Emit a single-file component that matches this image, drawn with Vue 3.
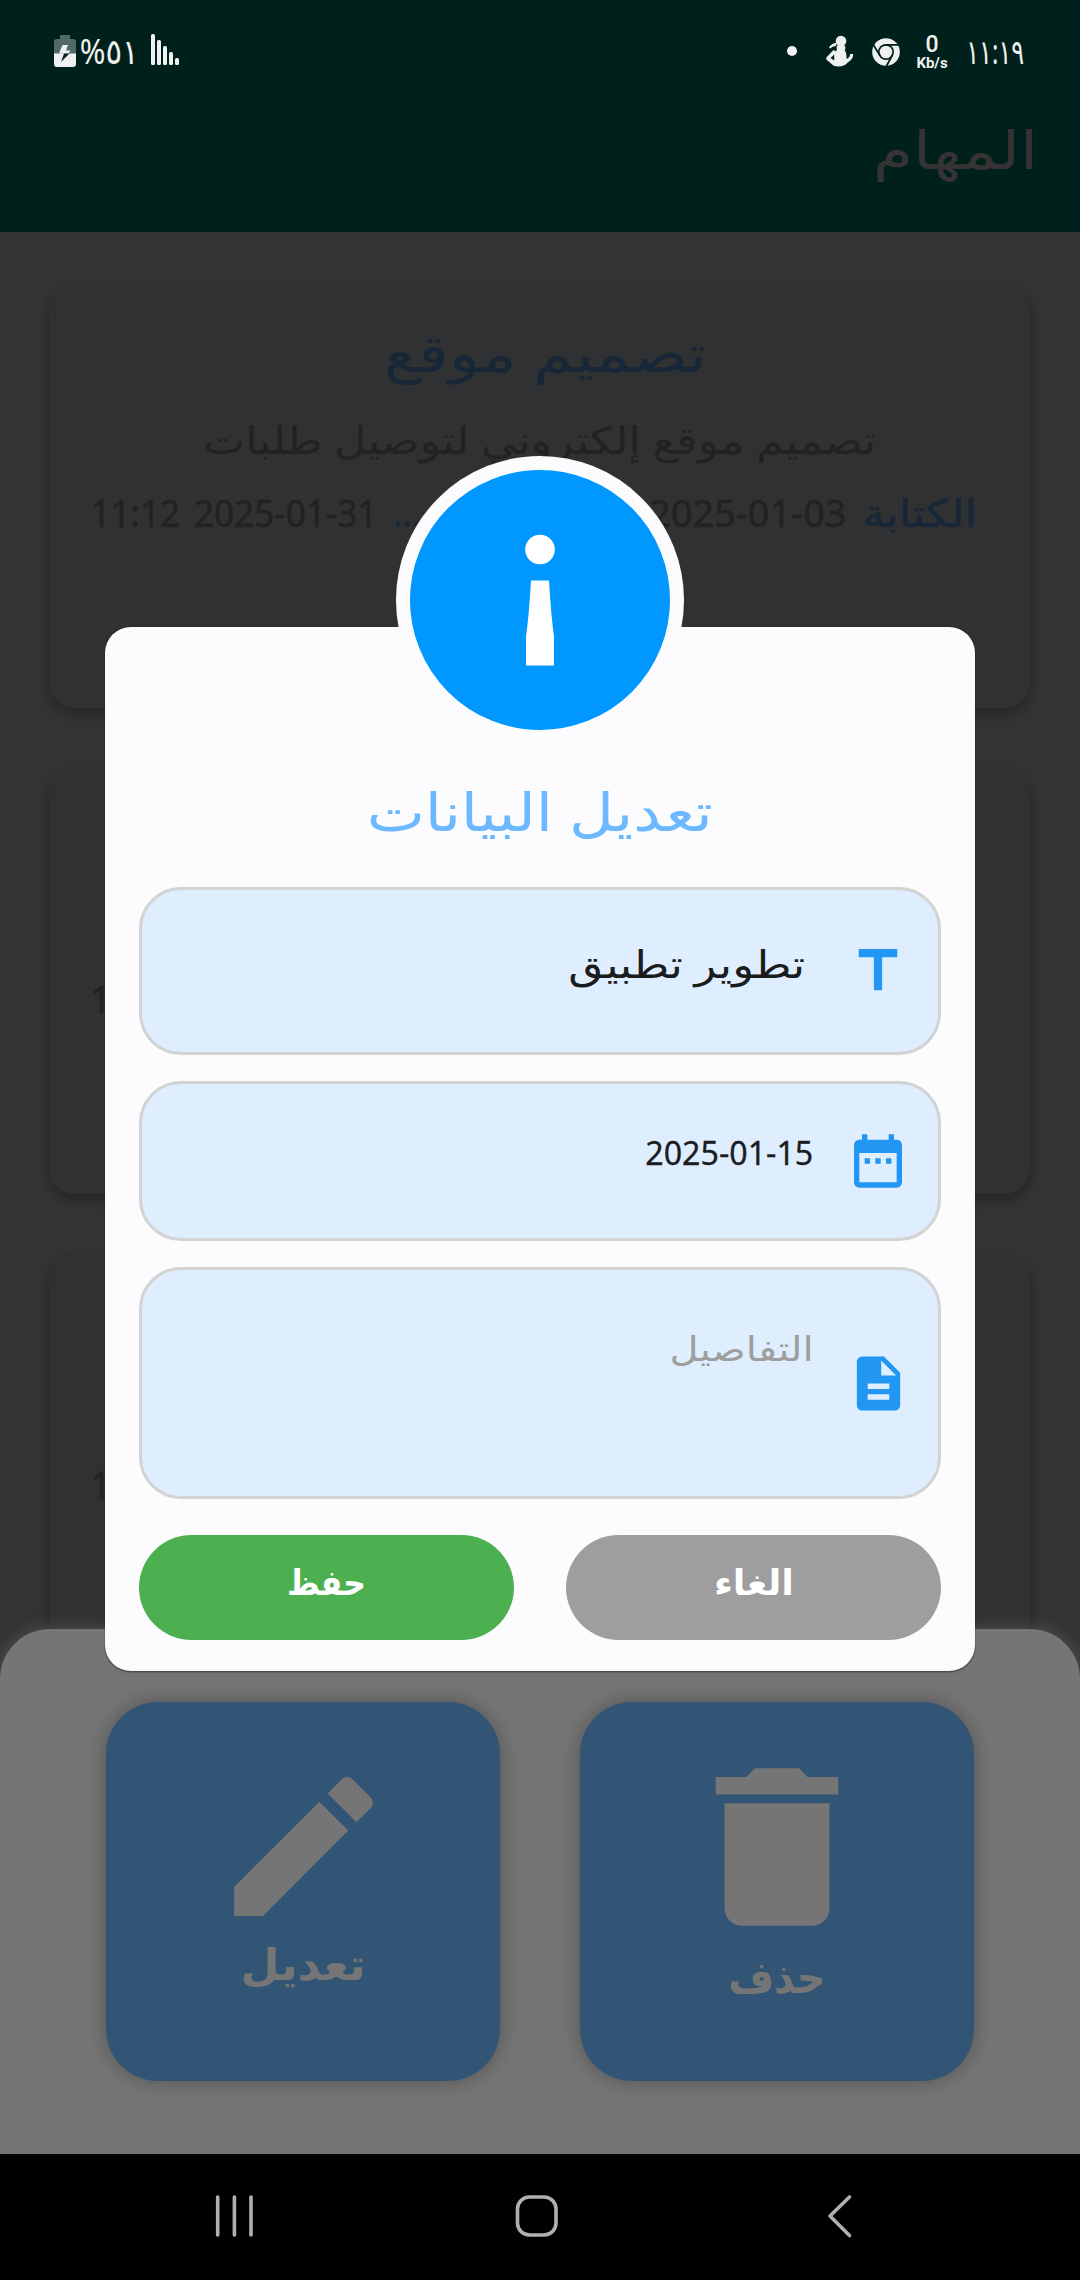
<script setup>
const cards = [
  { title: 'تصميم موقع', text: 'تصميم موقع إلكتروني لتوصيل طلبات' },
  { title: '', text: '' },
  { title: '', text: '' }
]

// Stretches or condenses a run of text to the given width, keeping its right edge.
const vFit = {
  mounted(el, { value }) {
    const natural = el.getBoundingClientRect().width
    el.style.transform = `scaleX(${value / natural})`
    el.style.marginLeft = `${value - natural}px`
  }
}
</script>

<template>
  <div class="screen">
    <header class="appbar">
      <div class="status">
        <div class="status-side">
          <svg class="battery" width="22" height="34" viewBox="0 0 22 34">
            <path d="M6 1h10v4h3q3 0 3 3v12H0V8q0-3 3-3h3z" fill="#526a65" />
            <path d="M0 19.500h22V30q0 3-3 3H3q-3 0-3-3z" fill="#eff1f0" />
            <path d="M8.500 11H14l-2 5.500h4.500L14.500 19.500H5z" fill="#eff1f0" />
            <path d="M10 19.500h5.500L7 28z" fill="#0b2420" />
          </svg>
          <span v-fit="59" class="fit percent">%٥١</span>
          <svg class="signal" width="28" height="31" viewBox="0 0 28 31" fill="#eff1f0">
            <rect x="0" y="0" width="4" height="31" rx="1.500" />
            <rect x="6" y="6" width="4" height="25" rx="1.500" />
            <rect x="12" y="12" width="4" height="19" rx="1.500" />
            <rect x="18" y="18" width="4" height="13" rx="1.500" />
            <rect x="24" y="24" width="4" height="7" rx="1.500" />
          </svg>
        </div>
        <div class="status-side">
          <i class="dot"></i>
          <svg class="person" width="28" height="32" viewBox="0 0 28 32" fill="#eff1f0">
            <circle cx="15" cy="6" r="5.300" />
            <path d="M3 12.500q3-5 8-4.500l-1.500 3q-3 0-5.500 2.500z" />
            <path d="M10.500 10.500h8.500q1 2.500-.2 4.800 1.700 2.700 1.700 5.700v3q3.200-1 3.700-5h3q0 5.500-5.500 8.500-3 4-9.500 4-4.700 0-7.700-3.500L.3 24.500v-2L7.500 15l2.800 1.500q.9-3 .2-6z" />
            <path d="M4.500 23l3.700-3.500v6z" fill="#00201b" />
          </svg>
          <svg class="chrome" width="28" height="28" viewBox="0 0 28 28">
            <circle cx="14" cy="14" r="13.800" fill="#eff1f0" />
            <circle cx="14" cy="14" r="8" fill="#00201b" />
            <circle cx="14" cy="14" r="6.300" fill="#eff1f0" />
            <path d="M13 6.900h13.300M8 17.600L1.300 6.800M20.300 17.300L14.500 28" stroke="#00201b" stroke-width="1.800" fill="none" />
          </svg>
          <div class="speed"><b>0</b><small>Kb/s</small></div>
          <span v-fit="58" class="fit clock">١١:١٩</span>
        </div>
      </div>
      <h1 dir="rtl"><span v-fit="165" class="fit">المهام</span></h1>
    </header>

    <main class="list" dir="rtl">
      <article v-for="(c, i) in cards" :key="i" class="card">
        <h2><span v-if="c.title" v-fit="323" class="fit">{{ c.title }}</span></h2>
        <p><span v-if="c.text" v-fit="673" class="fit">{{ c.text }}</span></p>
        <div class="dates">
          <div class="pair">
            <template v-if="i === 0">
              <b v-fit="115" class="fit">الكتابة</b>
              <span v-fit="197" class="fit">2025-01-03</span>
            </template>
          </div>
          <div class="pair">
            <b v-if="i === 0" v-fit="50" class="fit">م...</b>
            <span v-fit="287" class="fit moment" dir="ltr">11:12 2025-01-31</span>
          </div>
        </div>
      </article>
    </main>

    <section class="sheet" dir="rtl">
      <button class="tile delete">
        <svg width="210" height="210" viewBox="0 0 24 24"><path d="M6 19c0 1.100.9 2 2 2h8c1.100 0 2-.9 2-2V7H6v12zM19 4h-3.500l-1-1h-5l-1 1H5v2h14V4z" /></svg>
        <span v-fit="97" class="fit">حذف</span>
      </button>
      <button class="tile edit">
        <svg width="185" height="185" viewBox="0 0 24 24"><path d="M3 17.250V21h3.750L17.810 9.940l-3.750-3.750L3 17.250zM20.710 7.040c.39-.39.39-1.020 0-1.410l-2.340-2.340c-.39-.39-1.020-.39-1.410 0l-1.830 1.830 3.750 3.750 1.830-1.830z" /></svg>
        <span v-fit="125" class="fit">تعديل</span>
      </button>
    </section>

    <nav class="navbar">
      <svg width="1080" height="126" viewBox="0 0 1080 126" fill="none" stroke="#b0b0b0" stroke-width="3.600" stroke-linecap="round" stroke-linejoin="round">
        <path d="M217.700 43v38M234.400 43v38M251 43v38" />
        <rect x="517.500" y="43" width="38.500" height="38" rx="12" />
        <path d="M849.500 43L830 62l19.500 19.500" />
      </svg>
    </nav>

    <section class="dialog" dir="rtl">
      <div class="badge">
        <svg width="260" height="260" viewBox="0 0 260 260" fill="#fff">
          <circle cx="130" cy="79.500" r="14.800" />
          <path d="M121 110.500h18q2 35 5 56v29h-28v-29q3-21 5-56z" />
        </svg>
      </div>
      <h3><span v-fit="346" class="fit">تعديل البيانات</span></h3>
      <div class="field name">
        <svg width="66" height="66" viewBox="0 0 24 24"><path d="M5 4v3h5.500v12h3V7H19V4z" /></svg>
        <span v-fit="237" class="fit">تطوير تطبيق</span>
      </div>
      <div class="field date">
        <svg width="64" height="64" viewBox="0 0 24 24"><path d="M9 11H7v2h2v-2zm4 0h-2v2h2v-2zm4 0h-2v2h2v-2zm2-7h-1V2h-2v2H8V2H6v2H5c-1.110 0-1.990.9-1.990 2L3 20c0 1.100.89 2 2 2h14c1.100 0 2-.9 2-2V6c0-1.100-.9-2-2-2zm0 16H5V9h14v11z" /></svg>
        <span v-fit="168" class="fit">2025-01-15</span>
      </div>
      <div class="field details">
        <svg width="65" height="65" viewBox="0 0 24 24"><path d="M14 2H6c-1.100 0-1.990.9-1.990 2L4 20c0 1.100.89 2 1.990 2H18c1.100 0 2-.9 2-2V8l-6-6zm2 16H8v-2h8v2zm0-4H8v-2h8v2zm-3-5V3.500L18.500 9H13z" /></svg>
        <span v-fit="144" class="fit">التفاصيل</span>
      </div>
      <div class="actions">
        <button class="cancel"><span v-fit="80" class="fit">الغاء</span></button>
        <button class="save"><span v-fit="79" class="fit">حفظ</span></button>
      </div>
    </section>
  </div>
</template>

<style>
body {
  margin: 0;
  background: #000;
}
</style>

<style scoped>
.screen {
  position: relative;
  display: flex;
  flex-direction: column;
  width: 1080px;
  height: 2280px;
  overflow: hidden;
  background: #343434;
  font-family: "Noto Sans", "DejaVu Sans", sans-serif;
}
.fit {
  display: inline-block;
  flex: none;
  white-space: nowrap;
  transform-origin: right center;
}
h1, h2, h3, p {
  margin: 0;
  font-weight: 400;
}
button {
  border: 0;
  padding: 0;
  font-family: inherit;
}
.appbar {
  flex: none;
  height: 232px;
  background: #00201b;
}
.status {
  display: flex;
  justify-content: space-between;
  height: 102px;
  padding: 0 56px 0 54px;
  color: #eff1f0;
}
.status-side {
  display: flex;
  align-items: center;
}
.battery {
  margin-right: 4px;
}
.percent {
  font-size: 35px;
  line-height: 40px;
}
.signal {
  margin: -3px 0 0 12px;
}
.dot {
  width: 10px;
  height: 10px;
  margin-right: 29px;
  border-radius: 50%;
  background: #eff1f0;
}
.chrome {
  margin: 1px 0 0 18px;
}
.speed {
  display: flex;
  flex-direction: column;
  align-items: center;
  width: 32px;
  margin: 4px 18px 0 16px;
  font-family: Roboto, sans-serif;
}
.speed b {
  font-size: 23px;
  line-height: 20px;
  font-weight: 500;
}
.speed small {
  font-size: 15px;
  line-height: 17px;
  font-weight: 700;
}
.clock {
  font-size: 34px;
  line-height: 40px;
}
h1 {
  padding: 12px 42px 0 0;
  font-size: 53px;
  line-height: 70px;
  color: #363334;
}
.list {
  display: flex;
  flex-direction: column;
  gap: 60px;
  padding: 50px 50px 0 49px;
}
.card {
  flex: none;
  box-sizing: border-box;
  height: 426px;
  padding: 35px 53px 0 41px;
  border-radius: 26px;
  background: #303133;
  box-shadow: 0 6px 14px rgba(0, 0, 0, 0.3);
  text-align: center;
  color: #222;
}
.card h2 {
  height: 70px;
  padding-left: 24px;
  font-size: 52px;
  line-height: 70px;
  color: #182737;
}
.card p {
  height: 60px;
  margin-top: 22px;
  padding-left: 12px;
  font-size: 38px;
  line-height: 60px;
}
.dates {
  display: flex;
  justify-content: space-between;
  margin-top: 13px;
  font-size: 38px;
  line-height: 60px;
  -webkit-text-stroke: 0.5px currentColor;
}
.pair {
  display: flex;
  gap: 16px;
}
.moment {
  word-spacing: 5px;
}
.pair b {
  font-weight: 400;
  color: #182737;
}
.sheet {
  position: absolute;
  left: 0;
  top: 1629px;
  box-sizing: border-box;
  display: flex;
  justify-content: space-between;
  width: 1080px;
  height: 525px;
  padding: 73px 106px;
  border-radius: 50px 50px 0 0;
  background: #757575;
  box-shadow: 0 0 18px rgba(117, 117, 117, 0.5);
}
.tile {
  display: flex;
  flex-direction: column;
  align-items: center;
  width: 394px;
  height: 379px;
  border-radius: 52px;
  background: #325576;
  box-shadow: 0 0 20px rgba(0, 0, 0, 0.3);
  color: #757575;
  font-size: 44px;
  line-height: 60px;
  font-weight: 700;
}
.tile svg {
  fill: #757575;
  margin-bottom: -6px;
}
.delete {
  padding-top: 40px;
}
.edit {
  padding-top: 52px;
}
.navbar {
  position: absolute;
  left: 0;
  bottom: 0;
  height: 126px;
  background: #000;
}
.navbar svg {
  display: block;
}
.dialog {
  position: absolute;
  left: 105px;
  top: 627px;
  box-sizing: border-box;
  display: flex;
  flex-direction: column;
  gap: 26px;
  width: 870px;
  height: 1044px;
  padding: 149px 34px 0;
  border-radius: 26px;
  background: #fcfcff;
  box-shadow: 0 1px 2px rgba(0, 0, 0, 0.5);
}
.badge {
  position: absolute;
  left: 291px;
  top: -171px;
  border: 14.5px solid #fcfcff;
  border-radius: 50%;
  background: #0097ff;
}
.badge svg {
  display: block;
}
h3 {
  height: 70px;
  margin-bottom: 15px;
  text-align: center;
  font-size: 53px;
  line-height: 70px;
  color: #6cb9ff;
}
.field {
  flex: none;
  box-sizing: border-box;
  display: flex;
  border: 3px solid #d3d3d3;
  border-radius: 42px;
  background: #deeeff;
  color: #1a1c1e;
  line-height: 50px;
  padding-right: 27px;
}
.field svg {
  flex: none;
  align-self: center;
  fill: #2196f3;
}
.name {
  height: 168px;
  font-size: 38px;
}
.name span {
  margin: 48px 40px 0 0;
}
.date {
  height: 160px;
  padding-right: 28px;
  font-size: 33px;
  -webkit-text-stroke: 0.3px currentColor;
}
.date span {
  margin: 44px 33px 0 0;
}
.details {
  height: 232px;
  font-size: 34px;
  color: #9e9e9e;
}
.details span {
  margin: 53px 32px 0 0;
}
.actions {
  display: flex;
  gap: 52px;
  margin-top: 10px;
}
.actions button {
  flex: 1;
  height: 105px;
  padding-bottom: 12px;
  border-radius: 53px;
  font-size: 35px;
  line-height: 50px;
  font-weight: 700;
  color: #fff;
}
.actions .cancel {
  background: #9e9e9e;
}
.actions .save {
  background: #4caf50;
}
</style>
